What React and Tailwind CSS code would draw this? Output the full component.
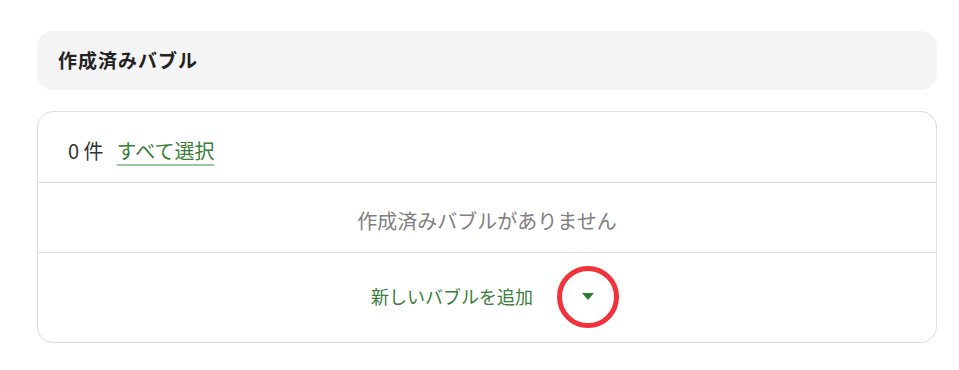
const font = { fontFamily: '"Noto Sans CJK JP", "Noto Sans", sans-serif' }

export default function App() {
  return (
    <div className="w-[959px] h-[370px] bg-white pl-[37px] pt-[31px]" style={font}>
      <div className="w-[900px]">
        {/* Section header */}
        <div className="h-[59px] rounded-2xl bg-[#f4f4f4] flex items-center px-[21px]">
          <h2 className="text-[19px] font-bold text-[#222] tracking-[1px]">作成済みバブル</h2>
        </div>

        {/* List card */}
        <div className="mt-[21px] rounded-2xl border border-[#dedede] overflow-hidden">
          <div className="h-[71px] flex items-center px-[30px] pt-[7px] border-b border-[#dedede] text-[20px]">
            <span className="text-[#333]">0 件</span>
            <a
              href="#"
              className="ml-[13px] text-[#3b7d3b] underline decoration-[#9cc69c] decoration-2 underline-offset-[5px]"
            >
              すべて選択
            </a>
          </div>

          <div className="h-[70px] flex items-center justify-center pt-[7px] border-b border-[#dedede] text-[20px] text-[#808080]">
            作成済みバブルがありません
          </div>

          <div className="h-[89px] flex items-center justify-center pl-[2px] pb-[2px]">
            <button className="flex items-center text-[18px] text-[#3b7d3b]">
              <span>新しいバブルを追加</span>
              <span className="relative ml-[43px] mr-[5px] w-[24px] h-[24px] flex items-center justify-center">
                <span className="w-0 h-0 border-l-[6px] border-r-[6px] border-t-[7px] border-l-transparent border-r-transparent border-t-[#2e7d32]" />
                <span className="absolute left-1/2 top-1/2 -translate-x-1/2 -translate-y-1/2 w-[62px] h-[62px] rounded-full border-[5px] border-[#f2313a]" />
              </span>
            </button>
          </div>
        </div>
      </div>
    </div>
  )
}
